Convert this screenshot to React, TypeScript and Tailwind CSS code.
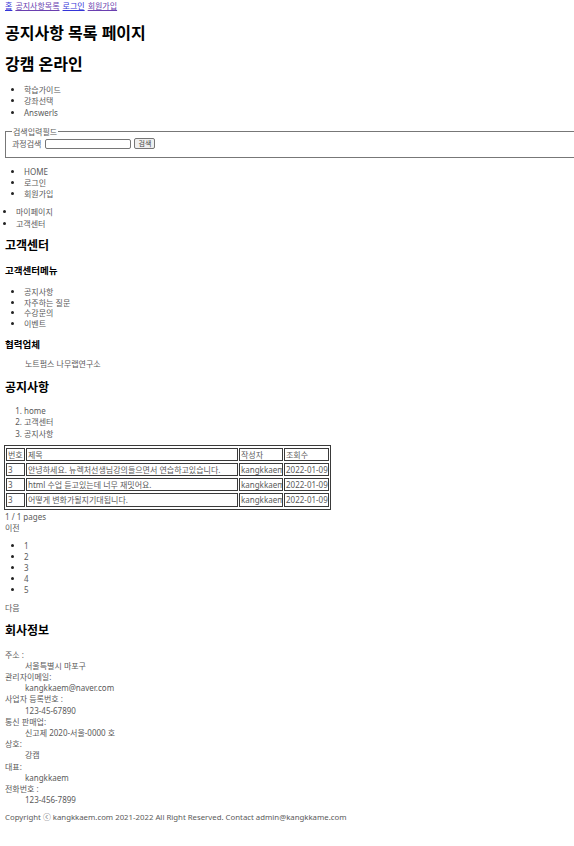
const topLinks = [
  { label: '홈', visited: false },
  { label: '공지사항목록', visited: true },
  { label: '로그인', visited: false },
  { label: '회원가입', visited: true },
]

const siteMenu = ['학습가이드', '강좌선택', 'Answerls']
const userMenu = ['HOME', '로그인', '회원가입']
const subMenu = ['마이페이지', '고객센터']
const csMenu = ['공지사항', '자주하는 질문', '수강문의', '이벤트']
const breadcrumb = ['home', '고객센터', '공지사항']

const notices = [
  { no: 3, title: '안녕하세요. 뉴렉처선생님강의들으면서 연습하고있습니다.', writer: 'kangkkaem', date: '2022-01-09' },
  { no: 3, title: 'html 수업 듣고있는데 너무 재밋어요.', writer: 'kangkkaem', date: '2022-01-09' },
  { no: 3, title: '어떻게 변화가될지기대됩니다.', writer: 'kangkkaem', date: '2022-01-09' },
]

const companyInfo = [
  ['주소 :', '서울특별시 마포구'],
  ['관리자이메일:', 'kangkkaem@naver.com'],
  ['사업자 등록번호 :', '123-45-67890'],
  ['통신 판매업:', '신고제 2020-서울-0000 호'],
  ['상호:', '강캠'],
  ['대표:', 'kangkkaem'],
  ['전화번호 :', '123-456-7899'],
]

const cell = 'border border-[#3a3a3a] h-[13px] px-[1px] py-0 text-left font-normal overflow-hidden whitespace-nowrap align-middle'

export default function App() {
  return (
    <div
      className="min-h-[846px] bg-white overflow-hidden pl-[5px] text-[8px] leading-[11.2px] text-[#5a5a5a]"
      style={{ fontFamily: '"Noto Sans", "Noto Sans CJK KR", sans-serif' }}
    >
      {/* header */}
      <nav className="flex gap-[3px] h-[11.4px]">
        {topLinks.map((link) => (
          <a
            key={link.label}
            href="#"
            className={link.visited ? 'underline text-[#6a3fb0]' : 'underline text-[#3535d8]'}
          >
            {link.label}
          </a>
        ))}
      </nav>

      <h1 className="mt-[11.6px] text-[16px] leading-[20px] font-bold text-black">공지사항 목록 페이지</h1>
      <h1 className="mt-[11px] text-[16px] leading-[20px] font-bold text-black">강캠 온라인</h1>

      <ul className="mt-[10.3px] list-disc pl-[19px] marker:text-[#222]">
        {siteMenu.map((item) => (
          <li key={item}>{item}</li>
        ))}
      </ul>

      <fieldset className="mt-[7.8px] w-[600px] border border-[#777] pl-[6px] pb-[7px]">
        <legend className="px-[1px]">검색입력필드</legend>
        <div className="flex items-center h-[12px] mt-[1px]">
          <span>과정검색</span>
          <input className="ml-[4px] w-[86px] h-[10px] border border-[#767676] rounded-[2px] bg-white" />
          <button className="ml-[3px] w-[21px] h-[11px] border border-[#767676] rounded-[2px] bg-[#efefef] text-[7px] leading-[9px] text-[#444]">
            검색
          </button>
        </div>
      </fieldset>

      <ul className="mt-[8px] list-disc pl-[19px] marker:text-[#222]">
        {userMenu.map((item) => (
          <li key={item}>{item}</li>
        ))}
      </ul>

      <ul className="mt-[6.8px] list-disc pl-[11px] marker:text-[#222]">
        {subMenu.map((item) => (
          <li key={item}>{item}</li>
        ))}
      </ul>

      {/* aside */}
      <h2 className="mt-[9px] text-[12px] leading-[16px] font-bold text-black">고객센터</h2>
      <h3 className="mt-[10.5px] text-[9.5px] leading-[13px] font-bold text-black">고객센터메뉴</h3>
      <ul className="mt-[9.8px] list-disc pl-[19px] marker:text-[#222]">
        {csMenu.map((item) => (
          <li key={item} className="leading-[10.7px]">{item}</li>
        ))}
      </ul>
      <h3 className="mt-[8.4px] text-[9.5px] leading-[13px] font-bold text-black">협력업체</h3>
      <div className="mt-[7px] pl-[20px]">노트펌스 나무랩연구소</div>

      {/* main */}
      <h2 className="mt-[10.4px] text-[12px] leading-[16px] font-bold text-black">공지사항</h2>
      <ol className="mt-[9.4px] list-decimal pl-[19px]">
        {breadcrumb.map((item) => (
          <li key={item}>{item}</li>
        ))}
      </ol>

      <table className="mt-[6px] -ml-[1px] w-[327px] table-fixed border-separate border-spacing-x-[1px] border-spacing-y-[2px] border border-[#3a3a3a]">
        <thead>
          <tr>
            <th className={`${cell} w-[19px] h-[13.3px]`}>번호</th>
            <th className={`${cell} w-[212px] h-[13.3px]`}>제목</th>
            <th className={`${cell} w-[44px] h-[13.3px]`}>작성자</th>
            <th className={`${cell} w-[45px] h-[13.3px]`}>조회수</th>
          </tr>
        </thead>
        <tbody>
          {notices.map((n, i) => (
            <tr key={i}>
              <td className={cell}>{n.no}</td>
              <td className={cell}>{n.title}</td>
              <td className={cell}>{n.writer}</td>
              <td className={cell}>{n.date}</td>
            </tr>
          ))}
        </tbody>
      </table>

      <div className="mt-[1px]">1 / 1 pages</div>
      <div>이전</div>
      <ul className="mt-[6.6px] list-disc pl-[19px] marker:text-[#222]">
        {[1, 2, 3, 4, 5].map((p) => (
          <li key={p}>{p}</li>
        ))}
      </ul>
      <div className="mt-[6px]">다음</div>

      {/* footer */}
      <h2 className="mt-[10.4px] text-[12px] leading-[16px] font-bold text-black">회사정보</h2>
      <dl className="mt-[9.4px]">
        {companyInfo.map(([label, value]) => (
          <div key={label}>
            <dt>{label}</dt>
            <dd className="pl-[20px]">{value}</dd>
          </div>
        ))}
      </dl>
      <div className="mt-[6.2px] text-[7.8px]">Copyright ⓒ kangkkaem.com 2021-2022 All Right Reserved. Contact admin@kangkkame.com</div>
    </div>
  )
}
